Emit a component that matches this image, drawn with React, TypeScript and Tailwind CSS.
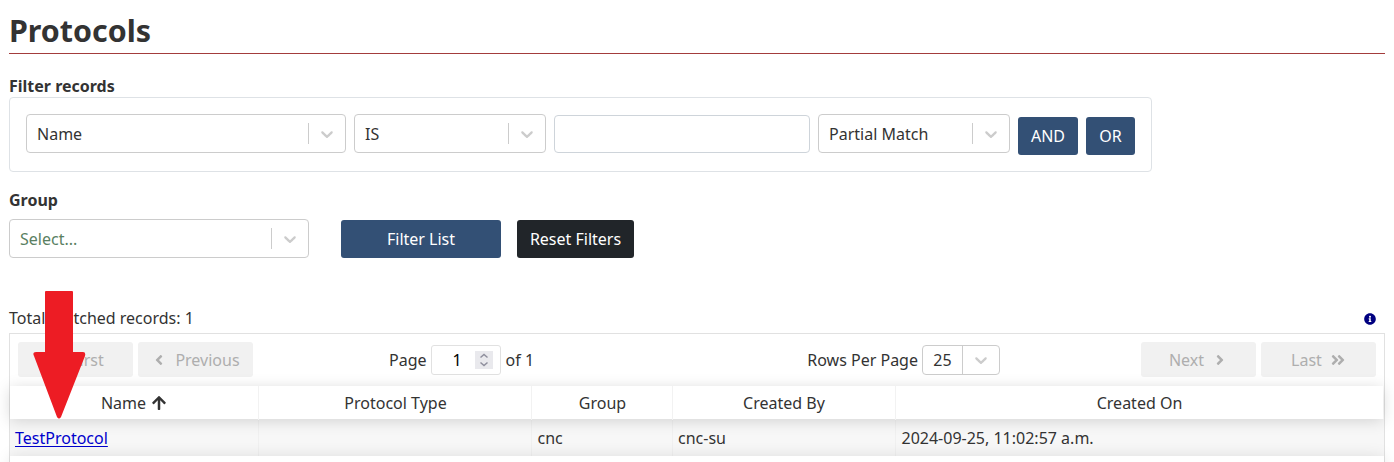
import React from "react";
import { FaAngleLeft, FaAngleRight, FaAngleDoubleRight, FaAngleDoubleLeft, FaArrowUp, FaInfoCircle } from "react-icons/fa";

const CHEVRON =
  "M4.516 7.548c0.436-0.446 1.043-0.481 1.576 0l3.908 3.747 3.908-3.747c0.533-0.481 1.141-0.446 1.574 0 0.436 0.445 0.408 1.197 0 1.615-0.406 0.418-4.695 4.502-4.695 4.502-0.217 0.223-0.502 0.335-0.787 0.335s-0.57-0.112-0.789-0.335c0 0-4.287-4.084-4.695-4.502s-0.436-1.170 0-1.615z";

function Chevron() {
  return (
    <svg width="20" height="20" viewBox="0 0 20 20" fill="#cccccc">
      <path d={CHEVRON} />
    </svg>
  );
}

function Select({ label, className, textClass = "text-[#333]" }: { label: string; className: string; textClass?: string }) {
  return (
    <div className={`flex h-[39px] items-center rounded-[4px] border border-[#ccc] bg-white ${className}`}>
      <span className={`flex-1 pl-[10px] ${textClass}`}>{label}</span>
      <span className="h-[21px] w-px bg-[#ccc]" />
      <span className="flex w-9 justify-center">
        <Chevron />
      </span>
    </div>
  );
}

function PagerButton({ children }: { children: React.ReactNode }) {
  return (
    <button disabled className="flex h-[35px] w-[115px] items-center justify-center rounded-[3px] bg-[#f1f1f1] text-[#aeaeae]">
      {children}
    </button>
  );
}

const GRID = "grid grid-cols-[249px_273px_141px_223px_1fr]";

export default function App() {
  return (
    <div className="relative h-[462px] w-[1394px] overflow-hidden bg-white px-[9px] font-['Noto_Sans','Open_Sans',sans-serif] text-[16px] leading-6 text-[#333]">
      <h1 className="h-[54px] border-b border-[#a33c3c] pt-[10px] text-[30.4px] leading-[42px] font-bold">Protocols</h1>

      <div className="mt-5 h-[23px] font-bold">Filter records</div>
      <div className="flex h-[75px] w-[1143px] items-start gap-2 rounded-[4px] border border-[#dee2e6] px-4 pt-4">
        <Select label="Name" className="w-[320px]" />
        <Select label="IS" className="w-[192px]" />
        <input className="mt-px h-[38px] w-[256px] rounded-[4px] border border-[#ced4da]" />
        <Select label="Partial Match" className="w-[192px]" />
        <button className="mt-[3px] h-[38px] w-[60px] rounded-[3px] bg-[#335075] text-white">AND</button>
        <button className="mt-[3px] h-[38px] w-[49px] rounded-[3px] bg-[#335075] text-white">OR</button>
      </div>

      <div className="mt-4 h-[31px] font-bold">Group</div>
      <div className="flex items-start">
        <Select label="Select..." className="w-[300px]" textClass="text-[#5a7f62]" />
        <button className="mt-px ml-8 h-[38px] w-[160px] rounded-[3px] bg-[#335075] text-white">Filter List</button>
        <button className="mt-px ml-4 h-[38px] w-[117px] rounded-[3px] bg-[#212529] text-white">Reset Filters</button>
      </div>

      <div className="mt-[48px] flex h-[27px] items-start justify-between pr-[9px]">
        <span>Total matched records: 1</span>
        <FaInfoCircle className="mt-[7px] size-3 text-[#000080]" />
      </div>

      <div className="h-[160px] w-[1376px] border border-[#e1e1e1]">
        <div className="flex h-[52px] items-start pt-2 pl-2">
          <PagerButton>
            <FaAngleDoubleLeft className="mr-2 size-4" />
            First
          </PagerButton>
          <div className="w-[5px]" />
          <PagerButton>
            <FaAngleLeft className="mr-2 size-4" />
            Previous
          </PagerButton>
          <div className="ml-[136px] flex h-[35px] items-center">
            Page
            <div className="ml-1 flex h-[30px] w-[70px] items-center justify-end rounded-[3px] border border-[#e1e1e1] bg-white pr-[7px] text-black">
              <span className="mr-[13px]">1</span>
              <span className="flex h-[18px] w-[18px] items-center justify-center bg-[#e9e9ed]">
                <svg width="18" height="18" viewBox="0 0 18 18" fill="none" stroke="#8f8f9d" strokeWidth="1.5">
                  <path d="M5.500 6.500 9 3.500l3.500 3M5.500 11.500 9 14.500l3.500-3" />
                </svg>
              </span>
            </div>
            <span className="ml-[5px]">of 1</span>
          </div>
          <div className="ml-auto flex h-[35px] items-center">
            Rows Per Page
            <div className="ml-1 flex h-[30px] w-[78px] items-center rounded-[4px] border border-[#ccc] bg-white">
              <span className="w-[39px] pt-px text-center">25</span>
              <span className="h-full w-px bg-[#ccc]" />
              <span className="flex flex-1 justify-center">
                <Chevron />
              </span>
            </div>
          </div>
          <div className="ml-[141px] flex gap-[5px] pr-2">
            <PagerButton>
              Next
              <FaAngleRight className="ml-2 size-4" />
            </PagerButton>
            <PagerButton>
              Last
              <FaAngleDoubleRight className="ml-2 size-4" />
            </PagerButton>
          </div>
        </div>

        <div className={`${GRID} relative mr-px h-[33px] bg-white text-center leading-[34px] shadow-[0_2px_15px_0_rgba(0,0,0,0.15)]`}>
          <div className="flex items-center justify-center border-r border-[#f2f2f2]">
            Name
            <FaArrowUp className="ml-[5px] size-4" />
          </div>
          <div className="border-r border-[#f2f2f2] pl-px">Protocol Type</div>
          <div className="border-r border-[#f2f2f2] pl-px">Group</div>
          <div className="border-r border-[#f2f2f2]">Created By</div>
          <div>Created On</div>
        </div>
        <div className={`${GRID} h-[37px] bg-[#f7f7f7] leading-[38px]`}>
          <div className="border-r border-[#f0f0f0] pl-[5px]">
            <a href="#" className="text-[#0000cc] underline decoration-1 underline-offset-2">TestProtocol</a>
          </div>
          <div className="border-r border-[#f0f0f0]" />
          <div className="border-r border-[#f0f0f0] pl-[5.500px]">cnc</div>
          <div className="border-r border-[#f0f0f0] pl-[5px]">cnc-su</div>
          <div className="pl-[5.500px]">2024-09-25, 11:02:57 a.m.</div>
        </div>
        <div className="relative h-[37px] bg-white shadow-[0_0_15px_0_rgba(0,0,0,0.1)]" />
      </div>

      <svg className="absolute top-[291px] left-[33px]" width="53" height="129" viewBox="0 0 53 129" fill="#ed1c24">
        <path d="M13 0h26q1 0 1 1v60h10q3 0 2 4L28 126q-2 3-4 0L1 65q-2-4 2-4h9V1q0-1 1-1z" />
      </svg>
    </div>
  );
}
